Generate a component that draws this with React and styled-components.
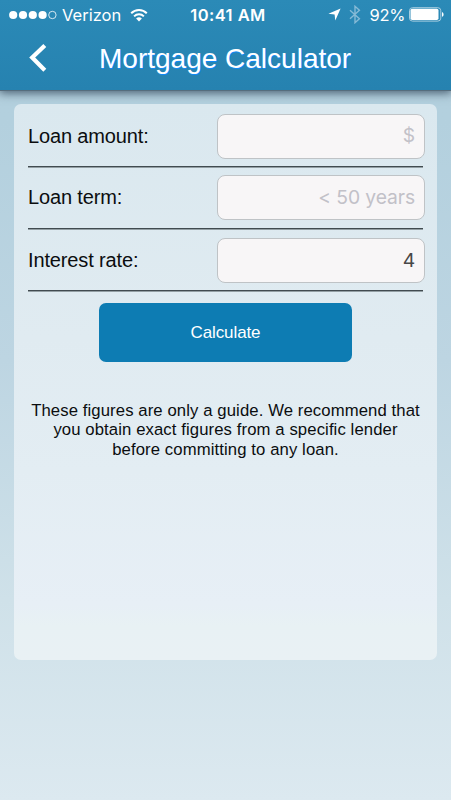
import React from "react";
import styled, { createGlobalStyle } from "styled-components";

const GlobalStyle = createGlobalStyle`
  * { box-sizing: border-box; }
  body { margin: 0; }
`;

const Screen = styled.div`
  width: 451px;
  height: 800px;
  overflow: hidden;
  display: flex;
  flex-direction: column;
  font-family: "Liberation Sans", Arial, sans-serif;
  color: #0b0d0f;
  background: linear-gradient(180deg, #b3cfdd 0%, #b3d0de 15%, #bdd5e2 45%, #cfe1e9 75%, #dce9f0 100%);
`;

const Header = styled.header`
  height: 90px;
  flex: none;
  background: linear-gradient(180deg, #2b8ab7, #2682b0);
  box-shadow: 0 1px 0 #566d7d, 0 2px 9px 1px rgba(35, 55, 75, 0.75);
  color: #fff;
`;

const StatusBar = styled.div`
  height: 29px;
  display: grid;
  grid-template-columns: 1fr auto 1fr;
  align-items: center;
  padding: 0 7px 0 9px;
  font-family: Inter, sans-serif;
  font-size: 16.5px;
`;

const StatusGroup = styled.div`
  display: flex;
  align-items: center;
  justify-content: ${(p) => (p.$end ? "flex-end" : "flex-start")};
  white-space: nowrap;
`;

const Carrier = styled.span`
  margin: 0 9px 0 5px;
  letter-spacing: 0;
`;

const Clock = styled.span`
  font-weight: 600;
  letter-spacing: 0.45px;
  white-space: nowrap;
  transform: translateX(1.5px);
`;

const Percent = styled.span`
  margin: 0 4px 0 9px;
  letter-spacing: -0.35px;
`;

const TitleBar = styled.div`
  height: 60px;
  display: grid;
  grid-template-columns: 99px 252px 1fr;
  align-items: center;
`;

const BackButton = styled.button`
  width: 30px;
  height: 36px;
  margin-left: 24px;
  padding: 0;
  border: 0;
  background: none;
  svg { display: block; }
`;

const Title = styled.h1`
  margin: 0;
  font-size: 28px;
  font-weight: 400;
  line-height: 32px;
  text-align: center;
  white-space: nowrap;
  text-shadow: 1px 1px 0 #1289f5;
`;

const Card = styled.main`
  width: 423px;
  height: 556px;
  margin: 14.3px 14px 0;
  padding: 0 14px;
  border-radius: 7px;
  display: flex;
  flex-direction: column;
  background: linear-gradient(180deg, #dae8ef 0%, #e0ebf1 42%, #e3edf3 66%, #e7eff6 90%, #e8f1f4 94%, #e9f1f4 100%);
`;

const Row = styled.div`
  width: 395px;
  height: ${(p) => p.$height}px;
  padding-top: ${(p) => p.$top}px;
  border-bottom: 1px solid #414b50;
  box-shadow: 0 1px 0 #939fa4;
  display: grid;
  grid-template-columns: 189px 208px;
  align-items: start;
`;

const Label = styled.label`
  font-size: 20px;
  line-height: 44px;
  letter-spacing: -0.14px;
  white-space: nowrap;
`;

const Field = styled.input`
  width: 208px;
  height: 45px;
  border: 1px solid #bfc3c6;
  border-radius: 8px;
  padding: 0 9px 2px;
  background: #f8f6f7;
  font-family: Inter, sans-serif;
  font-size: 19.3px;
  font-weight: 400;
  letter-spacing: -0.1px;
  text-align: right;
  color: #484848;
  outline: none;
  &::placeholder { color: #c2c1c8; opacity: 1; }
`;

const CalculateButton = styled.button`
  width: 253px;
  height: 59px;
  flex: none;
  align-self: center;
  margin-top: 11.5px;
  border: 0;
  border-radius: 7px;
  background: #0d7cb3;
  color: #fff;
  font-family: inherit;
  font-size: 17px;
  letter-spacing: -0.1px;
  padding: 2px 0 0;
`;

const Note = styled.p`
  margin: 39px -10px 0;
  font-size: 16.7px;
  line-height: 19.4px;
  letter-spacing: 0.1px;
  text-align: center;
`;

const Signal = () => (
  <svg width="48" height="10" viewBox="0 0 48 10">
    {[4.2, 14, 23.8, 33.6].map((x) => (
      <circle key={x} cx={x} cy="5" r="4.1" fill="#fff" />
    ))}
    <circle cx="43.4" cy="5" r="3.7" fill="none" stroke="#fff" strokeWidth="0.8" />
  </svg>
);

const Wifi = () => (
  <svg width="18" height="14" viewBox="0 0 18 14" fill="none" stroke="#fff" strokeWidth="2">
    <path d="M1.2 5.3a11 11 0 0 1 15.6 0M4.1 8.4a6.9 6.9 0 0 1 9.8 0" />
    <path d="M6.1 10.6a4.1 4.1 0 0 1 5.8 0L9 13.6z" fill="#fff" stroke="none" />
  </svg>
);

const LocationArrow = () => (
  <svg width="13" height="13" viewBox="0 0 13 13">
    <path d="M12.6.4 7.3 12.4 6.6 6.4.4 5.8z" fill="#fff" />
  </svg>
);

const BluetoothIcon = styled.svg`
  margin-left: 8px;
`;

const rows = [
  { id: "amount", label: "Loan amount:", placeholder: "$", height: 63, top: 9.7 },
  { id: "term", label: "Loan term:", placeholder: "< 50 years", height: 62, top: 8 },
  { id: "rate", label: "Interest rate:", value: "4", height: 62, top: 9 },
];

export default function App() {
  return (
    <Screen>
      <GlobalStyle />
      <Header>
        <StatusBar>
          <StatusGroup>
            <Signal />
            <Carrier>Verizon</Carrier>
            <Wifi />
          </StatusGroup>
          <Clock>10:41 AM</Clock>
          <StatusGroup $end>
            <LocationArrow />
            <BluetoothIcon width="12" height="19" viewBox="0 0 12 19" fill="none" stroke="#86bad6" strokeWidth="1.4">
              <path d="M1 5.2 10.4 13.7 6 17.7V1.3L10.4 5.2 1 13.8" />
            </BluetoothIcon>
            <Percent>92%</Percent>
            <svg width="35" height="15" viewBox="0 0 35 15">
              <rect x="0.5" y="0.7" width="31.3" height="13.4" rx="3" fill="none" stroke="#a8cee1" />
              <rect x="1.5" y="1.8" width="28" height="11.2" rx="1.7" fill="#fff" />
              <path d="M33 5c2.1.8 2.1 4 0 4.8z" fill="#fff" />
            </svg>
          </StatusGroup>
        </StatusBar>
        <TitleBar>
          <BackButton aria-label="Back">
            <svg width="30" height="36" viewBox="0 0 30 36" fill="none" stroke="#fff" strokeWidth="4.2">
              <path d="M20.8 4.4 8.2 16.6 20.8 29.2" />
            </svg>
          </BackButton>
          <Title>Mortgage Calculator</Title>
        </TitleBar>
      </Header>
      <Card>
        {rows.map((r) => (
          <Row key={r.id} $height={r.height} $top={r.top}>
            <Label htmlFor={r.id}>{r.label}</Label>
            <Field id={r.id} placeholder={r.placeholder} defaultValue={r.value} />
          </Row>
        ))}
        <CalculateButton>Calculate</CalculateButton>
        <Note>
          These figures are only a guide. We recommend that
          <br />
          you obtain exact figures from a specific lender
          <br />
          before committing to any loan.
        </Note>
      </Card>
    </Screen>
  );
}
